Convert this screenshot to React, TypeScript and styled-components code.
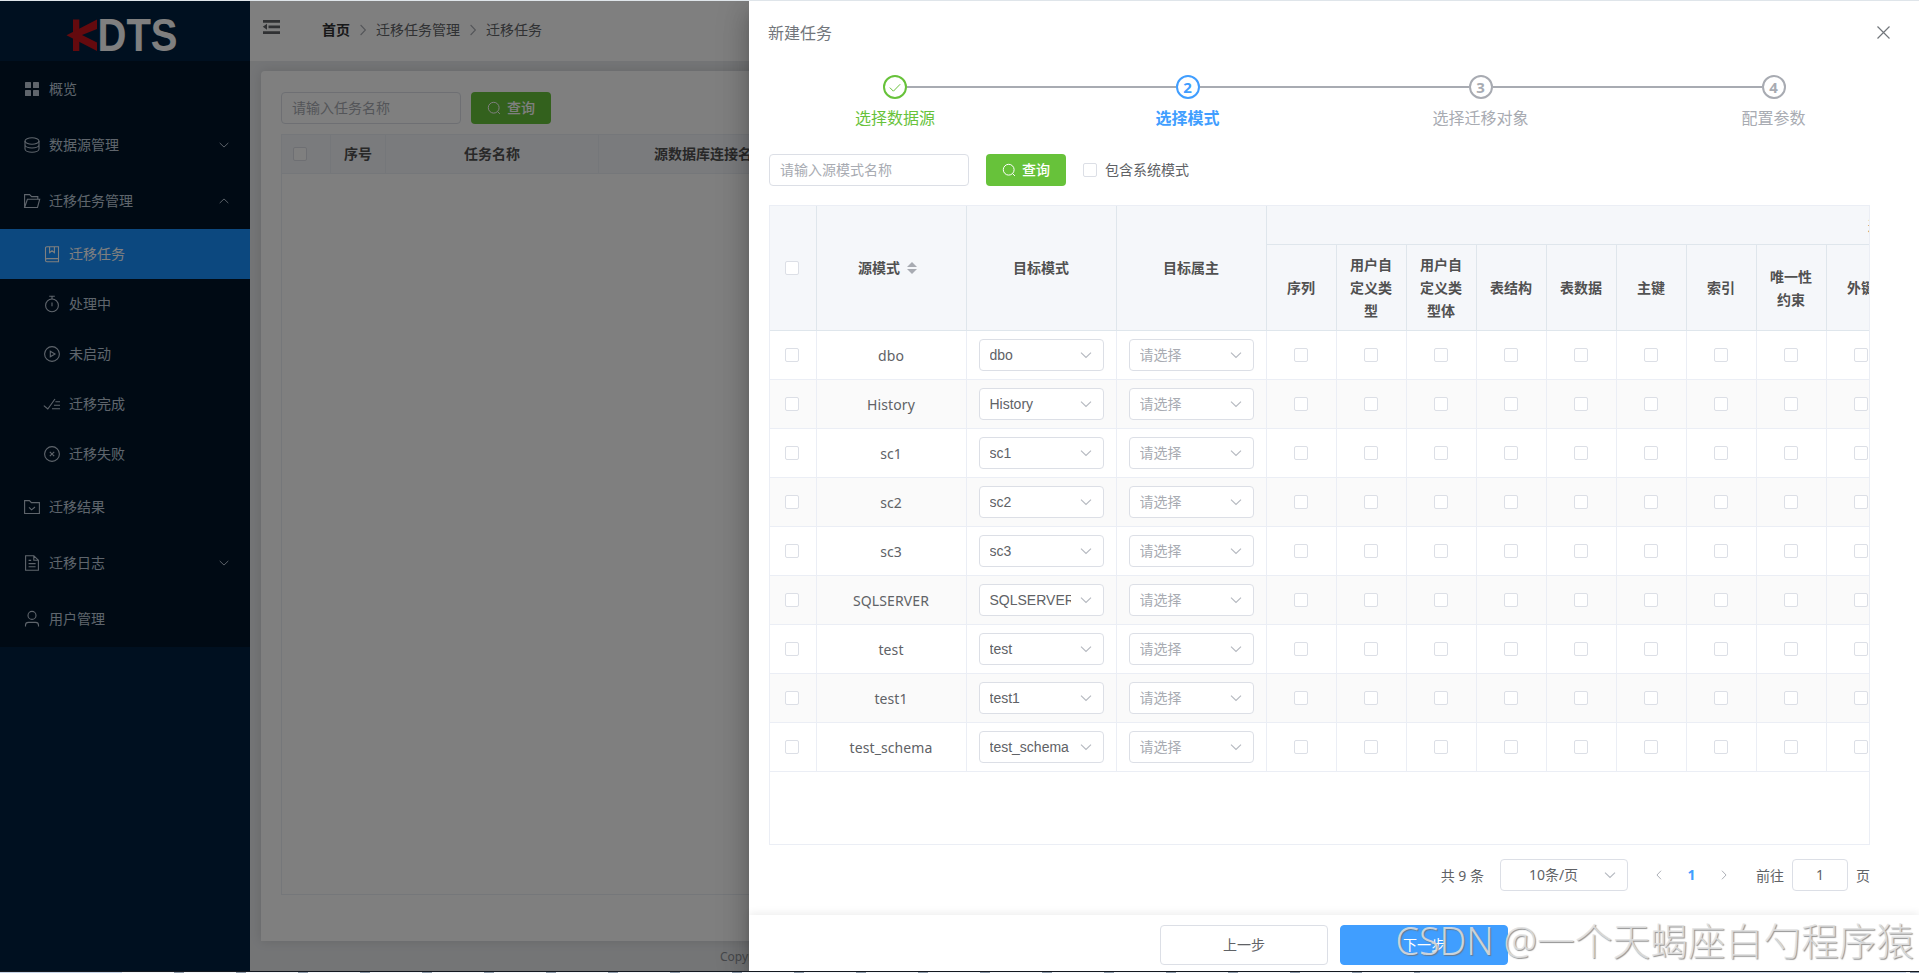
import React from "react";
import styled, { createGlobalStyle, css } from "styled-components";

const GlobalStyle = createGlobalStyle`
  * { box-sizing: border-box; }
  html, body { margin: 0; padding: 0; overflow: hidden; }
  body {
    font-family: "Noto Sans", "Noto Sans CJK SC", sans-serif;
    font-size: 14px;
    color: #606266;
  }
`;

/* ---------- shell ---------- */

const Page = styled.div`
  position: relative;
  display: flex;
  flex-direction: column;
  width: 100vw;
  height: 973px;
  overflow: hidden;
  background: #fff;
`;

const TopEdge = styled.div`
  flex: none;
  height: 1px;
  background: #dfe5ea;
`;

const Stage = styled.div`
  position: relative;
  display: flex;
  height: 970px;
  overflow: hidden;
`;

const BottomEdge = styled.div`
  flex: none;
  height: 2px;
  border-top: 1px solid #14181f;
  background:
    linear-gradient(#c3d2e6, #c3d2e6) 0 0 / 122px 1px no-repeat,
    linear-gradient(#c9d6e8, #c9d6e8) 1420px 0 / 486px 1px no-repeat,
    repeating-linear-gradient(90deg, #f2f6fa 0 50px, #8d9bab 50px 60px, #f2f6fa 60px 62px);
`;

/* ---------- sidebar ---------- */

const Sidebar = styled.aside`
  flex: none;
  display: flex;
  flex-direction: column;
  width: 250px;
  background: #002140;
`;

const LogoBar = styled.div`
  display: flex;
  height: 60px;
  padding: 16px 0 0 64px;
`;

const Menu = styled.nav`
  display: flex;
  flex-direction: column;
  background: #001529;
`;

const MenuItem = styled.div<{ $sub?: boolean; $active?: boolean }>`
  display: flex;
  align-items: center;
  height: ${(p) => (p.$sub ? 50 : 56)}px;
  padding: 0 20px 0 ${(p) => (p.$sub ? 43 : 23)}px;
  color: ${(p) => (p.$active ? "#fff" : "#bfcbd9")};
  background: ${(p) => (p.$active ? "#1890ff" : "transparent")};
  svg { flex: none; }
`;

const MenuLabel = styled.span`
  flex: 1;
  margin-left: 8px;
  line-height: 20px;
`;

/* ---------- main area ---------- */

const Main = styled.main`
  flex: 1;
  display: flex;
  flex-direction: column;
  min-width: 0;
  background: #e8eaed;
`;

const TopBar = styled.header`
  flex: none;
  display: flex;
  height: 60px;
  padding-left: 12px;
  background: #fff;
  > svg { margin-top: 16px; }
`;

const Breadcrumb = styled.div`
  display: flex;
  align-items: center;
  height: 57px;
  margin-left: 41px;
  gap: 6px;
`;

const Crumb = styled.span<{ $home?: boolean }>`
  padding-bottom: 2px;
  color: ${(p) => (p.$home ? "#303133" : "#606266")};
  font-weight: ${(p) => (p.$home ? 700 : 400)};
`;

const Card = styled.section`
  flex: none;
  display: flex;
  flex-direction: column;
  height: 870px;
  margin: 10px 10px 0 11px;
  padding: 21px 20px 0;
  border-radius: 4px 4px 0 0;
  background: #fff;
  box-shadow: 0 0 12px rgba(0, 0, 0, 0.12);
`;

const TaskTable = styled.div`
  display: flex;
  flex-direction: column;
  height: 761px;
  margin-top: 10px;
  border: 1px solid #ebeef5;
  overflow: hidden;
`;

const TaskHead = styled.div`
  display: grid;
  grid-template-columns: 49px 55px 213px 223px 1fr;
  height: 39px;
  border-bottom: 1px solid #ebeef5;
  background: #f5f7fa;
`;

const TaskHeadCell = styled.div<{ $left?: boolean }>`
  display: flex;
  align-items: center;
  justify-content: ${(p) => (p.$left ? "flex-start" : "center")};
  padding: 0 0 ${(p) => (p.$left ? 0 : 2)}px ${(p) => (p.$left ? 11 : 0)}px;
  border-right: 1px solid #ebeef5;
  color: #515151;
  font-weight: 700;
`;

const PageFooter = styled.footer`
  height: 30px;
  line-height: 31px;
  padding-left: 470px;
  color: #8c9096;
  font-size: 12px;
`;

/* ---------- shared controls ---------- */

const Row = styled.div<{ $gap: number }>`
  display: flex;
  align-items: center;
  gap: ${(p) => p.$gap}px;
`;

const CheckLabel = styled.span`
  padding-bottom: 2px;
`;

const TextInput = styled.div<{ $width: number; $center?: boolean }>`
  display: flex;
  align-items: center;
  justify-content: ${(p) => (p.$center ? "center" : "flex-start")};
  width: ${(p) => p.$width}px;
  height: 32px;
  padding: 0 10px 2px;
  border: 1px solid #dcdfe6;
  border-radius: 4px;
  background: #fff;
  color: ${(p) => (p.$center ? "#606266" : "#a8abb2")};
`;

const SearchButton = styled.div`
  display: flex;
  align-items: center;
  justify-content: center;
  gap: 6px;
  width: 80px;
  height: 32px;
  border-radius: 4px;
  background: #67c23a;
  color: #fff;
  font-weight: 500;
  span { padding-bottom: 2px; }
`;

const Checkbox = styled.span`
  flex: none;
  width: 14px;
  height: 14px;
  border: 1px solid #dcdfe6;
  border-radius: 2px;
  background: #fff;
`;

const SelectBox = styled.div<{ $width: number; $placeholder?: boolean; $page?: boolean }>`
  display: flex;
  align-items: center;
  width: ${(p) => p.$width}px;
  height: 32px;
  padding: 0 10px;
  border: 1px solid #dcdfe6;
  border-radius: 4px;
  background: #fff;
  color: ${(p) => (p.$placeholder ? "#a8abb2" : "#606266")};
  font-family: ${(p) =>
    p.$page
      ? '"Noto Sans", "Noto Sans CJK SC", sans-serif'
      : '"Liberation Sans", "Noto Sans CJK SC", sans-serif'};
  > span { padding-bottom: ${(p) => (p.$placeholder || p.$page ? 2 : 0)}px; }
`;

const SelectValue = styled.span<{ $center?: boolean }>`
  flex: 1;
  min-width: 0;
  margin-right: 8px;
  padding-left: ${(p) => (p.$center ? 1 : 0)}px;
  overflow: hidden;
  white-space: nowrap;
  text-align: ${(p) => (p.$center ? "center" : "left")};
`;

/* ---------- drawer ---------- */

const Mask = styled.div`
  position: absolute;
  inset: 0;
  background: rgba(0, 0, 0, 0.5);
`;

const Drawer = styled.div`
  position: absolute;
  top: 0;
  right: 0;
  bottom: 0;
  display: flex;
  flex-direction: column;
  width: 1170px;
  background: #fff;
  box-shadow: 0 8px 10px -5px rgba(0, 0, 0, 0.2), 0 16px 24px 2px rgba(0, 0, 0, 0.14),
    0 6px 30px 5px rgba(0, 0, 0, 0.12);
`;

const DrawerHeader = styled.div`
  flex: none;
  display: flex;
  align-items: center;
  justify-content: space-between;
  height: 64px;
  padding: 0 28px 2px 19px;
  color: #72767b;
  font-size: 16px;
`;

const Steps = styled.div`
  flex: none;
  display: grid;
  grid-template-columns: 292px 293px 293px 293px;
  height: 89px;
  padding-top: 10px;
`;

const stepColor = { done: "#67c23a", active: "#409eff", wait: "#a8abb2" };

const Step = styled.div<{ $state: "done" | "active" | "wait" }>`
  display: flex;
  flex-direction: column;
  align-items: center;
  color: ${(p) => stepColor[p.$state]};
  font-weight: ${(p) => (p.$state === "active" ? 700 : 400)};
`;

const StepTrack = styled.div`
  display: flex;
  align-items: center;
  width: 100%;
`;

const StepLine = styled.span<{ $hidden?: boolean }>`
  flex: 1;
  height: 2px;
  background: ${(p) => (p.$hidden ? "transparent" : "#a8abb2")};
`;

const StepDot = styled.span`
  display: flex;
  align-items: center;
  justify-content: center;
  width: 24px;
  height: 24px;
  border: 2px solid currentColor;
  border-radius: 50%;
  font-weight: 700;
  font-size: 15px;
  line-height: 1;
`;

const StepTitle = styled.span`
  margin-top: 8px;
  font-size: 16px;
  line-height: 22px;
`;

const FilterBar = styled.div`
  flex: none;
  display: flex;
  align-items: center;
  height: 32px;
  padding-left: 20px;
  gap: 17px;
`;

const SchemaTable = styled.div`
  flex: none;
  height: 640px;
  width: 1101px;
  margin: 19px 0 0 20px;
  border: 1px solid #ebeef5;
  overflow: hidden;
`;

const gridColumns = css`
  display: grid;
  grid-template-columns: 47px 150px 150px 150px repeat(18, 70px);
  width: 1757px;
`;

const SchemaHead = styled.div`
  ${gridColumns}
  grid-template-rows: 39px 86px;
  background: #f5f7fa;
  color: #515151;
  font-weight: 700;
  text-align: center;
`;

const HeadCell = styled.div<{ $tall?: boolean; $group?: boolean }>`
  display: flex;
  align-items: center;
  justify-content: center;
  padding: 0 11px 0 10px;
  grid-row: ${(p) => (p.$tall ? "1 / 3" : p.$group ? "1" : "2")};
  ${(p) => p.$group && "grid-column: 5 / 23;"}
  border-right: 1px solid #dfe6ec;
  border-bottom: 1px solid #dfe6ec;
  line-height: 23px;
  &:first-child { padding-right: 12px; }
`;

const HeadText = styled.span`
  padding-bottom: 1px;
`;

const SchemaRow = styled.div<{ $striped: boolean }>`
  ${gridColumns}
  height: 49px;
  background: ${(p) => (p.$striped ? "#fafafa" : "#fff")};
`;

const Cell = styled.div`
  display: flex;
  align-items: center;
  justify-content: center;
  padding-right: 1px;
  border-right: 1px solid #ebeef5;
  border-bottom: 1px solid #ebeef5;
  &:first-child { padding-right: 2px; }
`;

const SchemaName = styled.span`
  letter-spacing: 0.1px;
`;

const SortCaret = styled.span`
  display: flex;
  flex-direction: column;
  align-items: center;
  gap: 2px;
  width: 24px;
  &::before,
  &::after {
    content: "";
    border: 5px solid transparent;
  }
  &::before { border-top: 0; border-bottom-color: #a8abb2; }
  &::after { border-bottom: 0; border-top-color: #a8abb2; }
`;

const Pagination = styled.div`
  flex: none;
  display: flex;
  align-items: center;
  justify-content: flex-end;
  height: 32px;
  margin-top: 14px;
  padding-right: 49px;
`;

const PageSizeWrap = styled.div`
  margin: 0 25px 0 16px;
`;

const PageNumber = styled.span`
  width: 53px;
  padding-bottom: 2px;
  text-align: center;
  color: #409eff;
  font-weight: 700;
`;

const JumpLabel = styled.span<{ $lead?: boolean }>`
  margin: ${(p) => (p.$lead ? "0 8px 0 26px" : "0 0 0 8px")};
`;

const DrawerFooter = styled.div`
  display: flex;
  gap: 12px;
  height: 56px;
  margin-top: auto;
  padding: 10px 0 0 411px;
  background: #fff;
  box-shadow: 0 -2px 8px rgba(0, 0, 0, 0.07);
`;

const FooterButton = styled.div<{ $primary?: boolean }>`
  display: flex;
  align-items: center;
  justify-content: center;
  width: 168px;
  height: 40px;
  padding-bottom: 2px;
  border: 1px solid ${(p) => (p.$primary ? "#409eff" : "#dcdfe6")};
  border-radius: 4px;
  background: ${(p) => (p.$primary ? "#409eff" : "#fff")};
  color: ${(p) => (p.$primary ? "#fff" : "#606266")};
`;

const Watermark = styled.div`
  position: absolute;
  right: 5px;
  bottom: 9px;
  color: rgba(225, 225, 225, 0.85);
  font-family: "Noto Sans", "Noto Sans CJK SC", sans-serif;
  font-size: 37.7px;
  font-weight: 300;
  line-height: 46px;
  white-space: nowrap;
  text-shadow: 1px 1px 1px rgba(110, 110, 110, 0.75);
`;

/* ---------- icons ---------- */

const iconShapes: Record<string, React.ReactNode> = {
  grid: (
    <g fill="currentColor" stroke="none">
      <rect x="2" y="2" width="6" height="6" rx=".6" />
      <rect x="10" y="2" width="6" height="6" rx=".6" />
      <rect x="2" y="10" width="6" height="6" rx=".6" />
      <rect x="10" y="10" width="6" height="6" rx=".6" />
    </g>
  ),
  coin: (
    <>
      <ellipse cx="9" cy="5" rx="7" ry="3.2" />
      <path d="M2 5v8c0 1.8 3.1 3.2 7 3.2s7-1.4 7-3.2V5M2 8.8C2 10.6 5.1 12 9 12s7-1.4 7-3.2" />
    </>
  ),
  folderOpen: <path d="M1.6 15.5V2.6h5l2 2h6.2v2.6M1.6 15.5 4.4 7.2h12.3l-2.2 8.3z" />,
  notebook: (
    <path d="M2.5 14.6V3.2c0-.9.5-1.4 1.4-1.4h11.6v15H3.9c-.9 0-1.4-.6-1.4-1.6s.5-1.6 1.4-1.6h11.6M6.6 1.8v5.8L9 5.8l2.4 1.8V1.8" />
  ),
  timer: (
    <>
      <circle cx="9" cy="10.4" r="6.4" />
      <path d="M9 7.4v3.8M6.2 1.3h5.6M9 1.3v2.6" />
    </>
  ),
  play: (
    <>
      <circle cx="9" cy="9" r="7.4" />
      <path d="M7.3 6.2v5.6L12 9z" />
    </>
  ),
  finished: <path d="M.8 10.6 4.8 14 12 4M12.4 6.8H17M11 10.2h6M9 13.8h8" />,
  fail: (
    <>
      <circle cx="9" cy="9" r="7.4" />
      <path d="m6.8 6.8 4.4 4.4m0-4.4-4.4 4.4" />
    </>
  ),
  folderCheck: <path d="M1.6 15.5V2.6h4.8l2 2h8v10.9zM6 9.4l2.6 2.4L12 9" />,
  document: <path d="M2.6 16.2V1.8h8.2l4.6 4.4v10zM10.8 1.8v4.4h4.6M5.6 6.4h2.6M5.6 9.6h7M5.6 12.8h7" />,
  user: (
    <>
      <circle cx="9" cy="5.4" r="4" />
      <path d="M2.5 16.6v-1.4c0-1.8 1.2-2.8 3-2.8h7c1.8 0 3 1 3 2.8v1.4" />
    </>
  ),
};

const Icon = ({ name }: { name: string }) => (
  <svg width="18" height="18" viewBox="0 0 18 18" fill="none" stroke="currentColor" strokeWidth="1.1">
    {iconShapes[name]}
  </svg>
);

const Chevron = ({ dir = "down", size = 14, color = "currentColor" }: { dir?: string; size?: number; color?: string }) => {
  const paths: Record<string, string> = {
    down: "M2 4.6 7 9.4l5-4.8",
    up: "M2 9.4 7 4.6l5 4.8",
    left: "M9.4 2 4.6 7l4.8 5",
    right: "M4.6 2l4.8 5-4.8 5",
  };
  return (
    <svg width={size} height={size} viewBox="0 0 14 14" fill="none" stroke={color} strokeWidth="1.1">
      <path d={paths[dir]} />
    </svg>
  );
};

const SearchIcon = () => (
  <svg width="14" height="14" viewBox="0 0 14 14" fill="none" stroke="#fff" strokeWidth="1">
    <circle cx="6.7" cy="6.7" r="5.4" />
    <path d="m10.6 10.6 2.3 2.3" />
  </svg>
);

const Logo = () => (
  <svg width="120" height="40" viewBox="0 0 120 40">
    <g fill="#c8141c">
      <path d="M9 2.5h6.3V34H9z" />
      <path d="M33 2.5V12L18 18l15 7.5V34L2.5 18.2z" />
    </g>
    <text
      x="33.5"
      y="33.8"
      textLength="80"
      lengthAdjust="spacingAndGlyphs"
      fontFamily="Liberation Sans, sans-serif"
      fontWeight="700"
      fontSize="45.5"
      fill="#fff"
    >
      DTS
    </text>
  </svg>
);

const FoldIcon = () => (
  <svg width="19" height="20" viewBox="0 0 19 20" fill="#606266">
    <path d="M1 3h17v2.8H1zM6.5 8.4H18v2.8H6.5zM1 14.2h17V17H1zM5 6.8v6L.8 9.8z" />
  </svg>
);

/* ---------- data ---------- */

const menuItems = [
  { icon: "grid", label: "概览" },
  { icon: "coin", label: "数据源管理", arrow: "down" },
  { icon: "folderOpen", label: "迁移任务管理", arrow: "up" },
  { icon: "notebook", label: "迁移任务", sub: true, active: true },
  { icon: "timer", label: "处理中", sub: true },
  { icon: "play", label: "未启动", sub: true },
  { icon: "finished", label: "迁移完成", sub: true },
  { icon: "fail", label: "迁移失败", sub: true },
  { icon: "folderCheck", label: "迁移结果" },
  { icon: "document", label: "迁移日志", arrow: "down" },
  { icon: "user", label: "用户管理" },
];

const steps: { title: string; state: "done" | "active" | "wait" }[] = [
  { title: "选择数据源", state: "done" },
  { title: "选择模式", state: "active" },
  { title: "选择迁移对象", state: "wait" },
  { title: "配置参数", state: "wait" },
];

const objectColumns = [
  "序列",
  "用户自定义类型",
  "用户自定义类型体",
  "表结构",
  "表数据",
  "主键",
  "索引",
  "唯一性约束",
  "外键",
];

const schemas = ["dbo", "History", "sc1", "sc2", "sc3", "SQLSERVER", "test", "test1", "test_schema"];

/* ---------- app ---------- */

export default function App() {
  return (
    <Page>
      <GlobalStyle />
      <TopEdge />
      <Stage>
        <Sidebar>
          <LogoBar>
            <Logo />
          </LogoBar>
          <Menu>
            {menuItems.map((m) => (
              <MenuItem key={m.label} $sub={m.sub} $active={m.active}>
                <Icon name={m.icon} />
                <MenuLabel>{m.label}</MenuLabel>
                {m.arrow && <Chevron dir={m.arrow} size={12} />}
              </MenuItem>
            ))}
          </Menu>
        </Sidebar>

        <Main>
          <TopBar>
            <FoldIcon />
            <Breadcrumb>
              <Crumb $home>首页</Crumb>
              <Chevron dir="right" size={14} color="#a8abb2" />
              <Crumb>迁移任务管理</Crumb>
              <Chevron dir="right" size={14} color="#a8abb2" />
              <Crumb>迁移任务</Crumb>
            </Breadcrumb>
          </TopBar>
          <Card>
            <Row $gap={10}>
              <TextInput $width={180}>请输入任务名称</TextInput>
              <SearchButton>
                <SearchIcon />
                <span>查询</span>
              </SearchButton>
            </Row>
            <TaskTable>
              <TaskHead>
                <TaskHeadCell $left>
                  <Checkbox />
                </TaskHeadCell>
                <TaskHeadCell>序号</TaskHeadCell>
                <TaskHeadCell>任务名称</TaskHeadCell>
                <TaskHeadCell>源数据库连接名称</TaskHeadCell>
              </TaskHead>
            </TaskTable>
          </Card>
          <PageFooter>Copyright</PageFooter>
        </Main>

        <Mask />

        <Drawer>
          <DrawerHeader>
            新建任务
            <svg width="15" height="15" viewBox="0 0 15 15" fill="none" stroke="#72767b" strokeWidth="1.2">
              <path d="m1.5 1.5 12 12m0-12-12 12" />
            </svg>
          </DrawerHeader>
          <Steps>
            {steps.map((s, i) => (
              <Step key={s.title} $state={s.state}>
                <StepTrack>
                  <StepLine $hidden={i === 0} />
                  <StepDot>
                    {s.state === "done" ? (
                      <svg width="14" height="14" viewBox="0 0 14 14" fill="none" stroke="currentColor">
                        <path d="m1.8 7.6 3.6 3.6 6.8-7" />
                      </svg>
                    ) : (
                      i + 1
                    )}
                  </StepDot>
                  <StepLine $hidden={i === steps.length - 1} />
                </StepTrack>
                <StepTitle>{s.title}</StepTitle>
              </Step>
            ))}
          </Steps>
          <FilterBar>
            <TextInput $width={200}>请输入源模式名称</TextInput>
            <SearchButton>
              <SearchIcon />
              <span>查询</span>
            </SearchButton>
            <Row $gap={8}>
              <Checkbox />
              <CheckLabel>包含系统模式</CheckLabel>
            </Row>
          </FilterBar>
          <SchemaTable>
            <SchemaHead>
              <HeadCell $tall>
                <Checkbox />
              </HeadCell>
              <HeadCell $tall>
                <HeadText>源模式</HeadText>
                <SortCaret />
              </HeadCell>
              <HeadCell $tall>
                <HeadText>目标模式</HeadText>
              </HeadCell>
              <HeadCell $tall>
                <HeadText>目标属主</HeadText>
              </HeadCell>
              <HeadCell $group>迁移对象</HeadCell>
              {objectColumns.map((c) => (
                <HeadCell key={c}>{c}</HeadCell>
              ))}
            </SchemaHead>
            {schemas.map((name, i) => (
              <SchemaRow key={name} $striped={i % 2 === 1}>
                <Cell>
                  <Checkbox />
                </Cell>
                <Cell>
                  <SchemaName>{name}</SchemaName>
                </Cell>
                <Cell>
                  <SelectBox $width={125}>
                    <SelectValue>{name}</SelectValue>
                    <Chevron color="#b4b8bf" />
                  </SelectBox>
                </Cell>
                <Cell>
                  <SelectBox $width={125} $placeholder>
                    <SelectValue>请选择</SelectValue>
                    <Chevron color="#b4b8bf" />
                  </SelectBox>
                </Cell>
                {objectColumns.map((c) => (
                  <Cell key={c}>
                    <Checkbox />
                  </Cell>
                ))}
              </SchemaRow>
            ))}
          </SchemaTable>
          <Pagination>
            <span>共 9 条</span>
            <PageSizeWrap>
              <SelectBox $width={128} $page>
                <SelectValue $center>10条/页</SelectValue>
                <Chevron color="#b4b8bf" />
              </SelectBox>
            </PageSizeWrap>
            <Chevron dir="left" size={12} color="#a8abb2" />
            <PageNumber>1</PageNumber>
            <Chevron dir="right" size={12} color="#a8abb2" />
            <JumpLabel $lead>前往</JumpLabel>
            <TextInput $width={56} $center>
              1
            </TextInput>
            <JumpLabel>页</JumpLabel>
          </Pagination>
          <DrawerFooter>
            <FooterButton>上一步</FooterButton>
            <FooterButton $primary>下一步</FooterButton>
          </DrawerFooter>
        </Drawer>
      </Stage>
      <BottomEdge />
      <Watermark>CSDN @一个天蝎座白勺程序猿</Watermark>
    </Page>
  );
}
